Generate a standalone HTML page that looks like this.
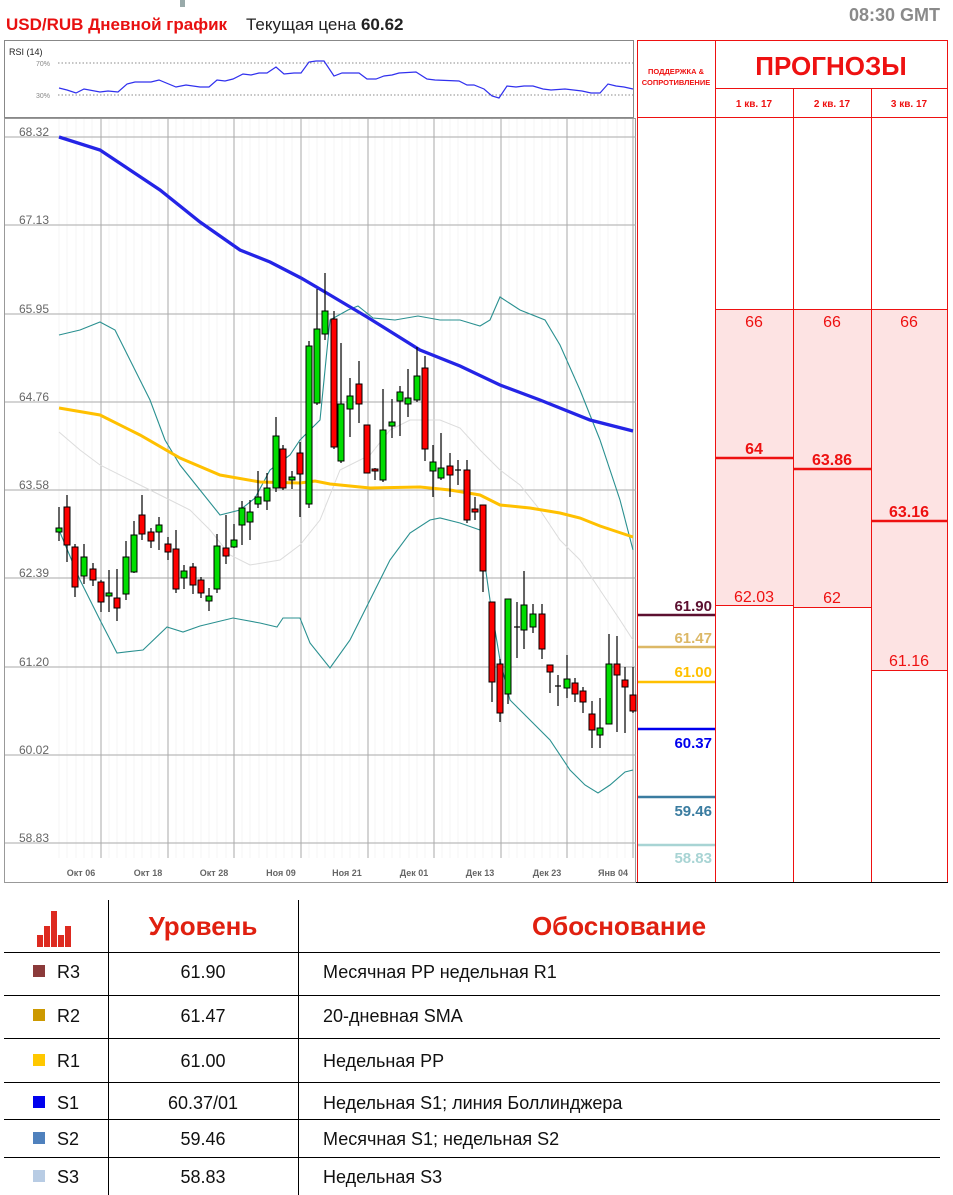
<!DOCTYPE html>
<html><head><meta charset="utf-8"><style>
html,body{margin:0;padding:0;background:#fff;width:953px;height:1195px;overflow:hidden}
svg{display:block}
text{font-family:"Liberation Sans","DejaVu Sans",sans-serif}
</style></head><body>
<svg width="953" height="1195" viewBox="0 0 953 1195" xmlns="http://www.w3.org/2000/svg">
<rect x="180" y="0" width="5" height="7" fill="#9aa"/>
<!-- header -->
<text x="6" y="30" font-size="17" font-weight="bold" fill="#e81010">USD/RUB Дневной график</text>
<text x="246" y="30" font-size="17" fill="#222">Текущая цена <tspan font-weight="bold">60.62</tspan></text>
<text x="940" y="21" font-size="18" font-weight="bold" fill="#8a8a8a" text-anchor="end">08:30 GMT</text>

<!-- RSI -->
<rect x="4.5" y="40.5" width="629" height="77" fill="#fff" stroke="#888"/>
<text x="9" y="55" font-size="9" fill="#222">RSI (14)</text>
<text x="36" y="66" font-size="7" fill="#888">70%</text>
<text x="36" y="98" font-size="7" fill="#888">30%</text>
<line x1="58" y1="63" x2="633" y2="63" stroke="#666" stroke-dasharray="1.5,2" stroke-width="0.8"/>
<line x1="58" y1="95" x2="633" y2="95" stroke="#666" stroke-dasharray="1.5,2" stroke-width="0.8"/>
<polyline fill="none" stroke="#3030ee" stroke-width="1.2" points="59,88 67,90 76,93 84,89 100,92 108,91 118,92 127,84 135,82 151,82 159,80 176,87 186,85 200,87 209,87 217,80 225,81 233,79 243,74 251,75 259,73 267,73 276,67 284,74 294,73 301,73 309,62 316,61 324,61 334,76 342,73 359,73 367,79 376,79 384,76 392,75 399,73 416,72 427,79 435,80 459,81 467,85 474,85 484,89 492,96 499,98 507,86 516,87 524,86 533,86 543,89 551,90 565,89 582,91 591,93 600,93 608,84 616,86 624,87 633,89"/>

<!-- main chart -->
<rect x="4.5" y="118.5" width="631" height="764" fill="#fff" stroke="#999"/>
<g stroke="#f4f4f4" stroke-width="1">
<line x1="59" y1="119" x2="59" y2="858"/><line x1="67" y1="119" x2="67" y2="858"/><line x1="76" y1="119" x2="76" y2="858"/><line x1="84" y1="119" x2="84" y2="858"/><line x1="92" y1="119" x2="92" y2="858"/><line x1="109" y1="119" x2="109" y2="858"/><line x1="117" y1="119" x2="117" y2="858"/><line x1="126" y1="119" x2="126" y2="858"/><line x1="134" y1="119" x2="134" y2="858"/><line x1="142" y1="119" x2="142" y2="858"/><line x1="151" y1="119" x2="151" y2="858"/><line x1="159" y1="119" x2="159" y2="858"/><line x1="176" y1="119" x2="176" y2="858"/><line x1="184" y1="119" x2="184" y2="858"/><line x1="193" y1="119" x2="193" y2="858"/><line x1="201" y1="119" x2="201" y2="858"/><line x1="209" y1="119" x2="209" y2="858"/><line x1="217" y1="119" x2="217" y2="858"/><line x1="226" y1="119" x2="226" y2="858"/><line x1="242" y1="119" x2="242" y2="858"/><line x1="250" y1="119" x2="250" y2="858"/><line x1="259" y1="119" x2="259" y2="858"/><line x1="267" y1="119" x2="267" y2="858"/><line x1="276" y1="119" x2="276" y2="858"/><line x1="284" y1="119" x2="284" y2="858"/><line x1="292" y1="119" x2="292" y2="858"/><line x1="309" y1="119" x2="309" y2="858"/><line x1="317" y1="119" x2="317" y2="858"/><line x1="325" y1="119" x2="325" y2="858"/><line x1="334" y1="119" x2="334" y2="858"/><line x1="342" y1="119" x2="342" y2="858"/><line x1="350" y1="119" x2="350" y2="858"/><line x1="359" y1="119" x2="359" y2="858"/><line x1="375" y1="119" x2="375" y2="858"/><line x1="384" y1="119" x2="384" y2="858"/><line x1="392" y1="119" x2="392" y2="858"/><line x1="400" y1="119" x2="400" y2="858"/><line x1="409" y1="119" x2="409" y2="858"/><line x1="417" y1="119" x2="417" y2="858"/><line x1="425" y1="119" x2="425" y2="858"/><line x1="442" y1="119" x2="442" y2="858"/><line x1="450" y1="119" x2="450" y2="858"/><line x1="458" y1="119" x2="458" y2="858"/><line x1="467" y1="119" x2="467" y2="858"/><line x1="475" y1="119" x2="475" y2="858"/><line x1="483" y1="119" x2="483" y2="858"/><line x1="492" y1="119" x2="492" y2="858"/><line x1="509" y1="119" x2="509" y2="858"/><line x1="517" y1="119" x2="517" y2="858"/><line x1="525" y1="119" x2="525" y2="858"/><line x1="534" y1="119" x2="534" y2="858"/><line x1="542" y1="119" x2="542" y2="858"/><line x1="550" y1="119" x2="550" y2="858"/><line x1="558" y1="119" x2="558" y2="858"/><line x1="575" y1="119" x2="575" y2="858"/><line x1="583" y1="119" x2="583" y2="858"/><line x1="592" y1="119" x2="592" y2="858"/><line x1="600" y1="119" x2="600" y2="858"/><line x1="608" y1="119" x2="608" y2="858"/><line x1="617" y1="119" x2="617" y2="858"/><line x1="625" y1="119" x2="625" y2="858"/>
</g>
<g stroke="#aaa" stroke-width="1">
<line x1="5" y1="137" x2="636" y2="137"/><line x1="5" y1="225" x2="636" y2="225"/><line x1="5" y1="314" x2="636" y2="314"/><line x1="5" y1="402" x2="636" y2="402"/><line x1="5" y1="490" x2="636" y2="490"/><line x1="5" y1="578" x2="636" y2="578"/><line x1="5" y1="667" x2="636" y2="667"/><line x1="5" y1="755" x2="636" y2="755"/><line x1="5" y1="843" x2="636" y2="843"/>
<line x1="101" y1="119" x2="101" y2="858"/><line x1="168" y1="119" x2="168" y2="858"/><line x1="234" y1="119" x2="234" y2="858"/><line x1="301" y1="119" x2="301" y2="858"/><line x1="368" y1="119" x2="368" y2="858"/><line x1="434" y1="119" x2="434" y2="858"/><line x1="501" y1="119" x2="501" y2="858"/><line x1="567" y1="119" x2="567" y2="858"/><line x1="633" y1="119" x2="633" y2="858"/>
</g>
<g font-size="12" fill="#666">
<text x="19" y="136">68.32</text><text x="19" y="224">67.13</text><text x="19" y="313">65.95</text><text x="19" y="401">64.76</text><text x="19" y="489">63.58</text><text x="19" y="577">62.39</text><text x="19" y="666">61.20</text><text x="19" y="754">60.02</text><text x="19" y="842">58.83</text>
</g>
<g font-size="9" font-weight="bold" fill="#666" text-anchor="middle">
<text x="81" y="876">Окт 06</text><text x="148" y="876">Окт 18</text><text x="214" y="876">Окт 28</text><text x="281" y="876">Ноя 09</text><text x="347" y="876">Ноя 21</text><text x="414" y="876">Дек 01</text><text x="480" y="876">Дек 13</text><text x="547" y="876">Дек 23</text><text x="613" y="876">Янв 04</text>
</g>

<!-- middle band -->
<polyline fill="none" stroke="#dcdcdc" stroke-width="1" points="59,432 80,450 100,465 130,480 160,495 190,510 210,530 230,555 250,565 280,560 300,545 320,520 340,470 370,455 390,430 410,420 440,420 460,428 480,450 500,470 520,485 540,510 560,540 580,560 600,590 620,620 633,640"/>
<!-- bollinger -->
<polyline fill="none" stroke="#2a9090" stroke-width="1.1" points="59,335 80,330 100,322 115,330 130,360 150,400 165,440 180,465 200,490 220,515 240,510 255,498 270,470 290,455 300,440 320,420 330,320 348,310 358,306 373,318 395,320 418,316 440,320 460,320 480,326 490,320 500,297 520,310 545,320 560,345 580,390 600,440 620,500 633,550"/>
<polyline fill="none" stroke="#2a9090" stroke-width="1.1" points="59,530 80,580 100,620 117,653 143,650 167,627 183,632 200,626 233,618 260,623 277,627 283,618 300,618 310,643 330,668 350,640 370,600 390,560 410,533 430,520 440,518 460,523 480,530 490,600 500,660 510,700 530,720 550,740 570,770 585,785 598,793 610,785 625,772 633,770"/>
<!-- MAs -->
<polyline fill="none" stroke="#ffc000" stroke-width="3" points="59,408 100,415 140,435 180,458 220,475 260,482 300,483 315,481 330,484 370,488 420,487 450,490 480,495 500,505 530,508 560,513 580,518 600,526 633,537"/>
<polyline fill="none" stroke="#2424e6" stroke-width="3.3" points="59,137 100,150 160,190 200,222 240,250 270,262 301,278 325,292 367,317 420,350 460,366 500,385 540,400 590,420 633,431"/>

<!-- candles -->
<g stroke="#000" stroke-width="1.2">
<line x1="59" y1="507" x2="59" y2="541"/><line x1="67" y1="495" x2="67" y2="562"/><line x1="75" y1="544" x2="75" y2="597"/><line x1="84" y1="544" x2="84" y2="584"/><line x1="93" y1="563" x2="93" y2="586"/><line x1="101" y1="580" x2="101" y2="612"/><line x1="109" y1="570" x2="109" y2="612"/><line x1="117" y1="569" x2="117" y2="621"/><line x1="126" y1="541" x2="126" y2="600"/><line x1="134" y1="521" x2="134" y2="573"/><line x1="142" y1="495" x2="142" y2="540"/><line x1="151" y1="528" x2="151" y2="548"/><line x1="159" y1="517" x2="159" y2="550"/><line x1="168" y1="537" x2="168" y2="560"/><line x1="176" y1="530" x2="176" y2="593"/><line x1="184" y1="565" x2="184" y2="589"/><line x1="193" y1="563" x2="193" y2="594"/><line x1="201" y1="577" x2="201" y2="598"/><line x1="209" y1="588" x2="209" y2="611"/><line x1="217" y1="534" x2="217" y2="593"/><line x1="226" y1="515" x2="226" y2="564"/><line x1="234" y1="524" x2="234" y2="548"/><line x1="242" y1="501" x2="242" y2="545"/><line x1="250" y1="500" x2="250" y2="540"/><line x1="258" y1="471" x2="258" y2="508"/><line x1="267" y1="473" x2="267" y2="510"/><line x1="276" y1="417" x2="276" y2="492"/><line x1="283" y1="445" x2="283" y2="490"/><line x1="292" y1="471" x2="292" y2="489"/><line x1="300" y1="442" x2="300" y2="517"/><line x1="309" y1="341" x2="309" y2="508"/><line x1="317" y1="289" x2="317" y2="405"/><line x1="325" y1="273" x2="325" y2="340"/><line x1="334" y1="311" x2="334" y2="449"/><line x1="341" y1="343" x2="341" y2="463"/><line x1="350" y1="378" x2="350" y2="437"/><line x1="359" y1="361" x2="359" y2="423"/><line x1="367" y1="425" x2="367" y2="473"/><line x1="375" y1="468" x2="375" y2="480"/><line x1="383" y1="389" x2="383" y2="482"/><line x1="392" y1="399" x2="392" y2="438"/><line x1="400" y1="386" x2="400" y2="436"/><line x1="408" y1="369" x2="408" y2="417"/><line x1="417" y1="347" x2="417" y2="402"/><line x1="425" y1="356" x2="425" y2="461"/><line x1="433" y1="445" x2="433" y2="497"/><line x1="441" y1="433" x2="441" y2="480"/><line x1="450" y1="453" x2="450" y2="497"/><line x1="458" y1="460" x2="458" y2="485"/><line x1="467" y1="460" x2="467" y2="523"/><line x1="475" y1="497" x2="475" y2="520"/><line x1="483" y1="505" x2="483" y2="592"/><line x1="492" y1="602" x2="492" y2="702"/><line x1="500" y1="659" x2="500" y2="722"/><line x1="508" y1="599" x2="508" y2="704"/><line x1="517" y1="602" x2="517" y2="658"/><line x1="524" y1="571" x2="524" y2="649"/><line x1="533" y1="604" x2="533" y2="633"/><line x1="542" y1="604" x2="542" y2="659"/><line x1="550" y1="665" x2="550" y2="693"/><line x1="558" y1="675" x2="558" y2="706"/><line x1="567" y1="655" x2="567" y2="698"/><line x1="575" y1="678" x2="575" y2="702"/><line x1="583" y1="687" x2="583" y2="713"/><line x1="592" y1="701" x2="592" y2="748"/><line x1="600" y1="698" x2="600" y2="748"/><line x1="609" y1="634" x2="609" y2="724"/><line x1="617" y1="636" x2="617" y2="732"/><line x1="625" y1="667" x2="625" y2="733"/><line x1="633" y1="667" x2="633" y2="713"/>
<line x1="514" y1="627" x2="520" y2="627"/><line x1="555" y1="686" x2="561" y2="686"/><line x1="455" y1="470" x2="461" y2="470"/>
</g>
<g stroke="#000" stroke-width="1">
<rect x="56" y="528" width="6" height="4" fill="#00dd00"/>
<rect x="64" y="507" width="6" height="38" fill="#ff0000"/>
<rect x="72" y="547" width="6" height="40" fill="#ff0000"/>
<rect x="81" y="557" width="6" height="19" fill="#00dd00"/>
<rect x="90" y="569" width="6" height="11" fill="#ff0000"/>
<rect x="98" y="582" width="6" height="20" fill="#ff0000"/>
<rect x="106" y="593" width="6" height="3" fill="#00dd00"/>
<rect x="114" y="598" width="6" height="10" fill="#ff0000"/>
<rect x="123" y="557" width="6" height="37" fill="#00dd00"/>
<rect x="131" y="535" width="6" height="37" fill="#00dd00"/>
<rect x="139" y="515" width="6" height="19" fill="#ff0000"/>
<rect x="148" y="532" width="6" height="9" fill="#ff0000"/>
<rect x="156" y="525" width="6" height="7" fill="#00dd00"/>
<rect x="165" y="544" width="6" height="8" fill="#ff0000"/>
<rect x="173" y="549" width="6" height="40" fill="#ff0000"/>
<rect x="181" y="571" width="6" height="7" fill="#00dd00"/>
<rect x="190" y="567" width="6" height="18" fill="#ff0000"/>
<rect x="198" y="580" width="6" height="13" fill="#ff0000"/>
<rect x="206" y="596" width="6" height="5" fill="#00dd00"/>
<rect x="214" y="546" width="6" height="43" fill="#00dd00"/>
<rect x="223" y="548" width="6" height="8" fill="#ff0000"/>
<rect x="231" y="540" width="6" height="7" fill="#00dd00"/>
<rect x="239" y="508" width="6" height="17" fill="#00dd00"/>
<rect x="247" y="512" width="6" height="10" fill="#00dd00"/>
<rect x="255" y="497" width="6" height="7" fill="#00dd00"/>
<rect x="264" y="488" width="6" height="13" fill="#00dd00"/>
<rect x="273" y="436" width="6" height="52" fill="#00dd00"/>
<rect x="280" y="449" width="6" height="39" fill="#ff0000"/>
<rect x="289" y="477" width="6" height="3" fill="#00dd00"/>
<rect x="297" y="453" width="6" height="21" fill="#ff0000"/>
<rect x="306" y="346" width="6" height="158" fill="#00dd00"/>
<rect x="314" y="329" width="6" height="74" fill="#00dd00"/>
<rect x="322" y="311" width="6" height="23" fill="#00dd00"/>
<rect x="331" y="319" width="6" height="128" fill="#ff0000"/>
<rect x="338" y="404" width="6" height="57" fill="#00dd00"/>
<rect x="347" y="396" width="6" height="13" fill="#00dd00"/>
<rect x="356" y="384" width="6" height="20" fill="#ff0000"/>
<rect x="364" y="425" width="6" height="48" fill="#ff0000"/>
<rect x="372" y="469" width="6" height="2" fill="#ff0000"/>
<rect x="380" y="430" width="6" height="50" fill="#00dd00"/>
<rect x="389" y="422" width="6" height="4" fill="#00dd00"/>
<rect x="397" y="392" width="6" height="9" fill="#00dd00"/>
<rect x="405" y="398" width="6" height="6" fill="#00dd00"/>
<rect x="414" y="376" width="6" height="24" fill="#00dd00"/>
<rect x="422" y="368" width="6" height="81" fill="#ff0000"/>
<rect x="430" y="462" width="6" height="9" fill="#00dd00"/>
<rect x="438" y="468" width="6" height="10" fill="#00dd00"/>
<rect x="447" y="466" width="6" height="9" fill="#ff0000"/>
<rect x="464" y="470" width="6" height="50" fill="#ff0000"/>
<rect x="472" y="509" width="6" height="3" fill="#ff0000"/>
<rect x="480" y="505" width="6" height="66" fill="#ff0000"/>
<rect x="489" y="602" width="6" height="80" fill="#ff0000"/>
<rect x="497" y="664" width="6" height="49" fill="#ff0000"/>
<rect x="505" y="599" width="6" height="95" fill="#00dd00"/>
<rect x="521" y="605" width="6" height="25" fill="#00dd00"/>
<rect x="530" y="614" width="6" height="13" fill="#00dd00"/>
<rect x="539" y="614" width="6" height="35" fill="#ff0000"/>
<rect x="547" y="665" width="6" height="7" fill="#ff0000"/>
<rect x="564" y="679" width="6" height="9" fill="#00dd00"/>
<rect x="572" y="683" width="6" height="11" fill="#ff0000"/>
<rect x="580" y="691" width="6" height="11" fill="#ff0000"/>
<rect x="589" y="714" width="6" height="16" fill="#ff0000"/>
<rect x="597" y="728" width="6" height="7" fill="#00dd00"/>
<rect x="606" y="664" width="6" height="60" fill="#00dd00"/>
<rect x="614" y="664" width="6" height="11" fill="#ff0000"/>
<rect x="622" y="680" width="6" height="7" fill="#ff0000"/>
<rect x="630" y="695" width="6" height="16" fill="#ff0000"/>
</g>

<!-- right panel -->
<rect x="715" y="309" width="78" height="296" fill="#fde3e3"/>
<rect x="793" y="309" width="78" height="298" fill="#fde3e3"/>
<rect x="871" y="309" width="77" height="361" fill="#fde3e3"/>
<g stroke="#ee1111" stroke-width="1" fill="none">
<rect x="637.5" y="40.5" width="310" height="842"/>
<line x1="715.5" y1="41" x2="715.5" y2="882"/>
<line x1="793.5" y1="88" x2="793.5" y2="882"/>
<line x1="871.5" y1="88" x2="871.5" y2="882"/>
<line x1="715" y1="88.5" x2="948" y2="88.5"/>
<line x1="638" y1="117.5" x2="948" y2="117.5"/>
<line x1="715" y1="309.5" x2="948" y2="309.5"/>
<line x1="715" y1="605.5" x2="793" y2="605.5"/>
<line x1="793" y1="607.5" x2="871" y2="607.5"/>
<line x1="871" y1="670.5" x2="948" y2="670.5"/>
</g>
<g stroke="#ee1111" stroke-width="2.5">
<line x1="716" y1="458" x2="793" y2="458"/>
<line x1="794" y1="469" x2="871" y2="469"/>
<line x1="872" y1="521" x2="948" y2="521"/>
</g>
<g fill="#ee1111" text-anchor="middle">
<text x="676" y="74" font-size="7.5" font-weight="bold">ПОДДЕРЖКА &amp;</text>
<text x="676" y="85" font-size="7.5" font-weight="bold">СОПРОТИВЛЕНИЕ</text>
<text x="831" y="75" font-size="26" font-weight="bold">ПРОГНОЗЫ</text>
<text x="754" y="107" font-size="10" font-weight="bold">1 кв. 17</text>
<text x="832" y="107" font-size="10" font-weight="bold">2 кв. 17</text>
<text x="909" y="107" font-size="10" font-weight="bold">3 кв. 17</text>
<text x="754" y="327" font-size="16">66</text>
<text x="832" y="327" font-size="16">66</text>
<text x="909" y="327" font-size="16">66</text>
<text x="754" y="454" font-size="16" font-weight="bold">64</text>
<text x="832" y="465" font-size="16" font-weight="bold">63.86</text>
<text x="909" y="517" font-size="16" font-weight="bold">63.16</text>
<text x="754" y="602" font-size="16">62.03</text>
<text x="832" y="603" font-size="16">62</text>
<text x="909" y="666" font-size="16">61.16</text>
</g>
<line x1="638" y1="615" x2="715" y2="615" stroke="#5c1030" stroke-width="2.5"/>
<line x1="638" y1="647" x2="715" y2="647" stroke="#dcb866" stroke-width="2.5"/>
<line x1="638" y1="682" x2="715" y2="682" stroke="#ffc000" stroke-width="2.5"/>
<line x1="638" y1="729" x2="715" y2="729" stroke="#0000ee" stroke-width="2.5"/>
<line x1="638" y1="797" x2="715" y2="797" stroke="#3a7ca0" stroke-width="2.5"/>
<line x1="638" y1="845" x2="715" y2="845" stroke="#a8d4d4" stroke-width="2.5"/>
<g font-size="15" font-weight="bold" text-anchor="end">
<text x="712" y="611" fill="#5c1030">61.90</text>
<text x="712" y="643" fill="#dcb866">61.47</text>
<text x="712" y="677" fill="#ffc000">61.00</text>
<text x="712" y="748" fill="#0000ee">60.37</text>
<text x="712" y="816" fill="#3a7ca0">59.46</text>
<text x="712" y="863" fill="#a8d4d4">58.83</text>
</g>
<line x1="636" y1="882.5" x2="948" y2="882.5" stroke="#000" stroke-width="1"/>

<!-- table -->
<g stroke="#000" stroke-width="1">
<line x1="108.5" y1="900" x2="108.5" y2="1195"/>
<line x1="298.5" y1="900" x2="298.5" y2="1195"/>
<line x1="4" y1="952.5" x2="940" y2="952.5"/>
<line x1="4" y1="995.5" x2="940" y2="995.5"/>
<line x1="4" y1="1038.5" x2="940" y2="1038.5"/>
<line x1="4" y1="1082.5" x2="940" y2="1082.5"/>
<line x1="4" y1="1119.5" x2="940" y2="1119.5"/>
<line x1="4" y1="1157.5" x2="940" y2="1157.5"/>
</g>
<g fill="#dd2a20">
<rect x="37" y="935" width="6" height="12"/><rect x="44" y="926" width="6" height="21"/><rect x="51" y="911" width="6" height="36"/><rect x="58" y="935" width="6" height="12"/><rect x="65" y="926" width="6" height="21"/>
</g>
<text x="203" y="935" font-size="26" font-weight="bold" fill="#e02010" text-anchor="middle">Уровень</text>
<text x="619" y="935" font-size="26" font-weight="bold" fill="#e02010" text-anchor="middle">Обоснование</text>
<g font-size="18" fill="#111">
<rect x="33" y="965" width="12" height="12" fill="#8b3a3a"/><text x="57" y="978">R3</text><text x="203" y="978" text-anchor="middle">61.90</text><text x="323" y="978">Месячная PP недельная R1</text>
<rect x="33" y="1009" width="12" height="12" fill="#cc9900"/><text x="57" y="1022">R2</text><text x="203" y="1022" text-anchor="middle">61.47</text><text x="323" y="1022">20-дневная SMA</text>
<rect x="33" y="1054" width="12" height="12" fill="#ffc800"/><text x="57" y="1067">R1</text><text x="203" y="1067" text-anchor="middle">61.00</text><text x="323" y="1067">Недельная PP</text>
<rect x="33" y="1096" width="12" height="12" fill="#0000ee"/><text x="57" y="1109">S1</text><text x="203" y="1109" text-anchor="middle">60.37/01</text><text x="323" y="1109">Недельная S1; линия Боллинджера</text>
<rect x="33" y="1132" width="12" height="12" fill="#4f81bd"/><text x="57" y="1145">S2</text><text x="203" y="1145" text-anchor="middle">59.46</text><text x="323" y="1145">Месячная S1; недельная S2</text>
<rect x="33" y="1170" width="12" height="12" fill="#b8cce4"/><text x="57" y="1183">S3</text><text x="203" y="1183" text-anchor="middle">58.83</text><text x="323" y="1183">Недельная S3</text>
</g>
</svg>
</body></html>
